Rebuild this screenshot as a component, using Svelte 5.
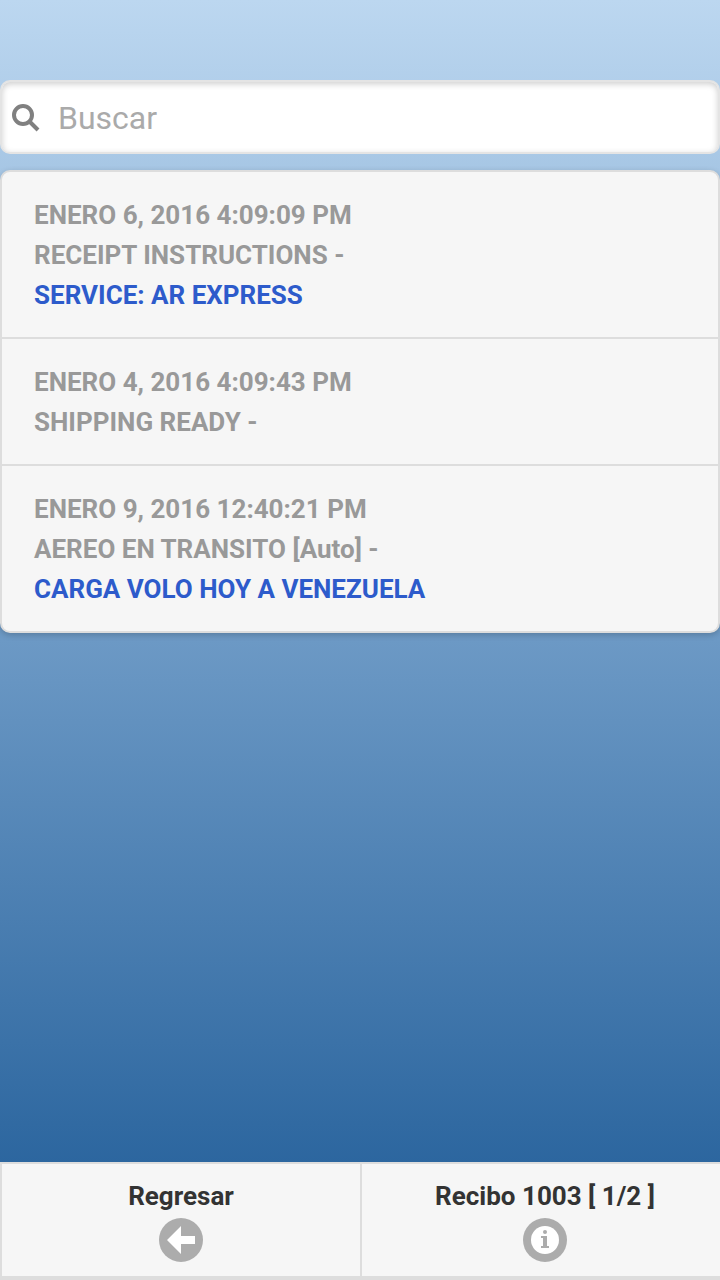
<script>
  let query = $state('');

  const events = [
    { id: 1, date: 'ENERO 6, 2016 4:09:09 PM', status: 'RECEIPT INSTRUCTIONS -', note: 'SERVICE: AR EXPRESS' },
    { id: 2, date: 'ENERO 4, 2016 4:09:43 PM', status: 'SHIPPING READY -', note: '' },
    { id: 3, date: 'ENERO 9, 2016 12:40:21 PM', status: 'AEREO EN TRANSITO [Auto] -', note: 'CARGA VOLO HOY A VENEZUELA' },
  ];

  let visible = $derived(
    events.filter((e) => `${e.date} ${e.status} ${e.note}`.toLowerCase().includes(query.toLowerCase()))
  );
</script>

<div class="page">
  <main>
    <label class="search">
      <svg viewBox="0 0 28 28" aria-hidden="true">
        <circle cx="11" cy="11" r="9" />
        <path d="M17.5 17.5 L26 26" />
      </svg>
      <input type="search" placeholder="Buscar" aria-label="Buscar" bind:value={query} />
    </label>

    <ul class="events">
      {#each visible as event (event.id)}
        <li>
          <p>{event.date}</p>
          <p>{event.status}</p>
          {#if event.note}
            <p class="note">{event.note}</p>
          {/if}
        </li>
      {/each}
    </ul>
  </main>

  <footer>
    <button>
      <span>Regresar</span>
      <svg viewBox="0 0 44 44" aria-hidden="true">
        <circle cx="22" cy="22" r="22" fill="#acacac" />
        <path d="M8 22 L22 8 V18 H36 V26 H22 V36 Z" fill="#fff" />
      </svg>
    </button>
    <button class="info">
      <span>Recibo 1003 [ 1/2 ]</span>
      <svg viewBox="0 0 44 44" aria-hidden="true">
        <circle cx="22" cy="22" r="22" fill="#acacac" />
        <circle cx="22" cy="22" r="14" fill="#fff" />
        <circle cx="22" cy="14" r="2" fill="#acacac" />
        <path d="M18 18 H24 V28 H26 V30 H18 V28 H20 V20 H18 Z" fill="#acacac" />
      </svg>
    </button>
  </footer>
</div>

<style>
  :global(body) {
    margin: 0;
  }

  .page {
    display: flex;
    flex-direction: column;
    min-height: 100vh;
    font-family: Roboto, sans-serif;
    background: linear-gradient(#bcd7f0, #6c99c5 50%, #2c669f 91%);
  }

  main {
    flex: 1;
    padding-top: 80px;
  }

  .search {
    display: flex;
    align-items: center;
    gap: 18px;
    padding: 16px 10px 14px;
    background: #fff;
    border: 2px solid rgba(221, 221, 221, 0.8);
    border-radius: 10px;
    box-shadow: inset 0 2px 6px rgba(0, 0, 0, 0.2);
  }

  .search svg {
    flex: none;
    width: 28px;
    height: 28px;
    fill: none;
    stroke: #808080;
    stroke-width: 4;
  }

  .search input {
    flex: 1;
    min-width: 0;
    height: 40px;
    padding: 0;
    border: 0;
    outline: 0;
    background: transparent;
    color: #333;
    font: 32px/38px Roboto, sans-serif;
  }

  .search input::placeholder {
    color: #aaa;
  }

  .events {
    margin: 16px 0 0;
    padding: 0;
    list-style: none;
    background: #f6f6f6;
    border: 2px solid #ddd;
    border-radius: 10px;
    box-shadow: 0 2px 6px rgba(0, 0, 0, 0.2);
  }

  .events li {
    padding: 23px 32px 22px;
  }

  .events li + li {
    border-top: 2px solid #ddd;
  }

  .events p {
    margin: 0;
    color: #999;
    font-size: 26px;
    font-weight: 700;
    line-height: 40px;
  }

  .events .note {
    color: #2d5bcb;
  }

  footer {
    display: grid;
    grid-template-columns: 1fr 1fr;
    border-top: 2px solid #ddd;
    border-bottom: 4px solid #ddd;
  }

  footer button {
    display: flex;
    flex-direction: column;
    align-items: center;
    gap: 6px;
    padding: 16px 0 14px;
    background: #f6f6f6;
    border: 0;
    border-left: 2px solid #ddd;
    color: #333;
    font: 700 26px/32px Roboto, sans-serif;
    cursor: pointer;
  }

  footer .info {
    padding-left: 8px;
  }

  footer svg {
    width: 44px;
    height: 44px;
  }
</style>
